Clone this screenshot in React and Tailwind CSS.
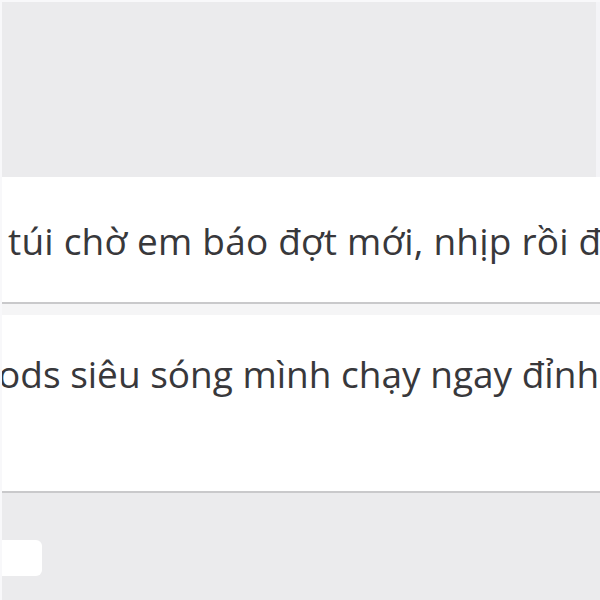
import React from 'react';

const font = { fontFamily: '"Open Sans", "Noto Sans", sans-serif' };

export default function App() {
  return (
    <div className="w-[600px] h-[600px] bg-[#ebebed] overflow-hidden flex flex-col border-l-2 border-t-2 border-[#f8f8fa]" style={font}>
      <div className="h-[175px] shrink-0 border-r-4 border-[#f4f4f7]" />

      <div className="h-[127px] shrink-0 bg-white border-b-2 border-[#c9c9cb] overflow-hidden whitespace-nowrap pt-[45px] pl-[6px]">
        <p className="text-[37px] leading-[37px] tracking-[0.2px] text-[#38383b]">túi chờ em báo đợt mới, nhịp rồi đang</p>
      </div>

      <div className="h-[11px] shrink-0 bg-[#f5f5f6]" />

      <div className="h-[178px] shrink-0 bg-white border-b-2 border-[#c9c9cb] overflow-hidden whitespace-nowrap pt-[40px]">
        <p className="text-[37px] leading-[37px] text-[#38383b] -ml-[4px]">ods siêu sóng mình chạy ngay đỉnh</p>
      </div>

      <div className="flex-1 flex flex-col">
        <div className="mt-[47px] w-[40px] h-[36px] bg-white rounded-r-md" />
      </div>
    </div>
  );
}
